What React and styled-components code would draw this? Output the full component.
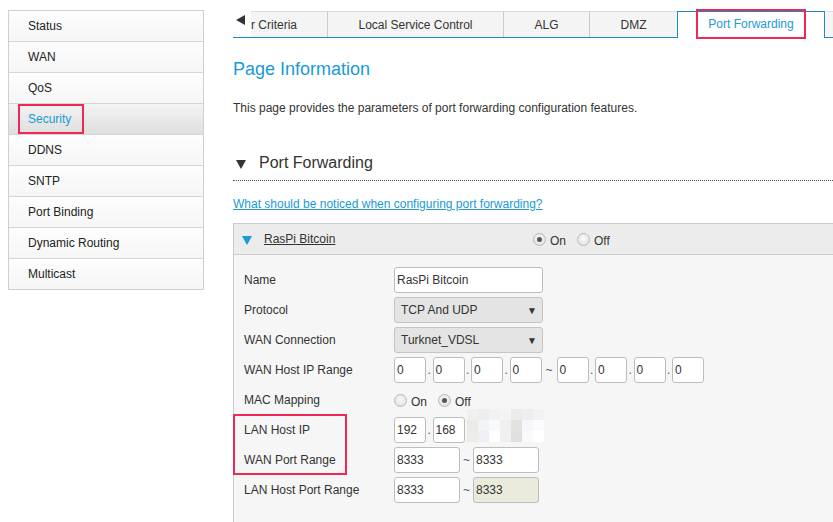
import styled, { createGlobalStyle, css } from "styled-components";

const GlobalStyle = createGlobalStyle`
  * { box-sizing: border-box; }
  body {
    margin: 0;
    background: #fff;
    color: #333;
    font-family: "Liberation Sans", Arial, sans-serif;
    font-size: 12px;
    overflow: hidden;
  }
`;

const BLUE = "#1a9ad6";
const RED = "#ec2a55";

const Page = styled.div`
  display: flex;
  gap: 29px;
  padding: 10px 0 0 8px;
  width: 900px;
`;

/* ---------- sidebar ---------- */

const SideMenu = styled.ul`
  list-style: none;
  margin: 0;
  padding: 0;
  width: 196px;
  flex: none;
  align-self: flex-start;
  border: 1px solid #cfcfcf;
`;

const NavItem = styled.li`
  height: 31px;
  display: flex;
  align-items: center;
  padding-left: 9px;
  border-bottom: 1px solid #d6d6d6;
  background: linear-gradient(#fdfdfd, #f6f6f6);
  color: #222;
  &:last-child { border-bottom: none; height: 30px; }
  ${(p) =>
    p.$active &&
    css`
      background: linear-gradient(#f3f3f3, #dfdfdf);
      color: ${BLUE};
    `}
`;

const NavLabel = styled.span`
  display: inline-block;
  height: 30px;
  line-height: 26px;
  padding: 0 11px 0 8px;
  border: 2px solid ${(p) => (p.$marked ? RED : "transparent")};
`;

/* ---------- main ---------- */

const Main = styled.div`
  width: 640px;
  flex: none;
`;

const TabBar = styled.div`
  display: flex;
  align-items: flex-start;
  margin-top: 1px;
  border-bottom: 1px solid #1a8ac6;
`;

const ScrollArrow = styled.div`
  width: 18px;
  height: 26px;
  flex: none;
  padding: 4px 0 0 3px;
  &::before {
    content: "";
    display: block;
    width: 0;
    height: 0;
    border-top: 5px solid transparent;
    border-bottom: 5px solid transparent;
    border-right: 9px solid #333;
  }
`;

const Tab = styled.div`
  flex: none;
  width: ${(p) => p.$w}px;
  height: 26px;
  display: flex;
  align-items: center;
  justify-content: ${(p) => (p.$clipped ? "flex-start" : "center")};
  background: #f4f4f4;
  border-top: 1px solid #dcdcdc;
  border-right: 1px solid #cacaca;
  color: #333;
  white-space: nowrap;
  ${(p) =>
    p.$active &&
    css`
      height: 27px;
      margin: 0 1px -1px -1px;
      background: #fff;
      border: 1px solid #1a8ac6;
      border-bottom: none;
      color: ${BLUE};
    `}
`;

const TabLabel = styled.span`
  display: inline-block;
  height: 30px;
  line-height: 26px;
  padding: 0 10px;
  margin-top: -3px;
  border: 2px solid ${RED};
`;

const PageTitle = styled.h1`
  margin: 20px 0 0;
  font-size: 18px;
  line-height: 22px;
  font-weight: normal;
  color: ${BLUE};
`;

const Description = styled.p`
  margin: 20px 0 0;
  line-height: 16px;
`;

const SectionHead = styled.h2`
  margin: 37px 0 0;
  display: flex;
  align-items: center;
  gap: 13px;
  padding: 0 0 8px 3px;
  border-bottom: 1px dotted #555;
  font-size: 16px;
  line-height: 19px;
  font-weight: normal;
  color: #333;
  &::before {
    content: "";
    margin-top: 4px;
    border-left: 5px solid transparent;
    border-right: 5px solid transparent;
    border-top: 9px solid #333;
  }
`;

const HelpLink = styled.a`
  display: block;
  margin-top: 15px;
  line-height: 16px;
  color: ${BLUE};
  text-decoration: underline;
`;

const Panel = styled.div`
  margin-top: 11px;
`;

const PanelHead = styled.div`
  height: 32px;
  display: flex;
  align-items: center;
  padding-left: 8px;
  background: #ececec;
  border: 1px solid #cccccc;
`;

const Caret = styled.span`
  flex: none;
  margin: 2px 12px 0 0;
  border-left: 5px solid transparent;
  border-right: 5px solid transparent;
  border-top: 9px solid ${BLUE};
`;

const EntryName = styled.span`
  flex: 0 0 269px;
  color: #333;
  text-decoration: underline;
`;

const RadioGroup = styled.div`
  display: flex;
  align-items: center;
  gap: 4px;
`;

const Radio = styled.span`
  position: relative;
  display: inline-block;
  width: 13px;
  height: 13px;
  border-radius: 50%;
  border: 1px solid #b9b9b9;
  background: radial-gradient(circle at 50% 40%, #fafafa 0%, #dedede 90%);
  &:not(:first-child) { margin-left: 7px; }
  ${(p) =>
    p.$checked &&
    css`
      &::after {
        content: "";
        position: absolute;
        left: 3px;
        top: 3px;
        width: 5px;
        height: 5px;
        border-radius: 50%;
        background: #555;
      }
    `}
`;

const RadioText = styled.span`
  margin-top: 3px;
  color: #333;
`;

const PanelBody = styled.div`
  position: relative;
  padding: 10px 0 22px 10px;
  background: #f6f6f6;
  border-left: 1px solid #cccccc;
`;

const Row = styled.div`
  height: 30px;
  display: flex;
  align-items: center;
`;

const Label = styled.div`
  flex: 0 0 150px;
  color: #333;
`;

const Field = styled.div`
  display: flex;
  align-items: center;
`;

const TextBox = styled.div`
  width: ${(p) => p.$w}px;
  height: 26px;
  display: flex;
  align-items: center;
  padding-left: 2px;
  background: ${(p) => (p.$readonly ? "#ebebdc" : "#fff")};
  border: 1px solid #bdbdbd;
  border-radius: 3px;
  color: #333;
`;

const Select = styled.div`
  width: 149px;
  height: 26px;
  display: flex;
  align-items: center;
  justify-content: space-between;
  padding: 0 5px 0 6px;
  background: #e4e4e4;
  border: 1px solid #c4c4c4;
  border-radius: 3px;
  color: #333;
  &::after {
    content: "▼";
    font-size: 10px;
    color: #333;
  }
`;

const Sep = styled.span`
  width: ${(p) => p.$w || 6.5}px;
  text-align: center;
  color: #555;
`;

const Blur = styled.div`
  display: grid;
  grid-template-columns: repeat(7, 11px);
  grid-auto-rows: 11px;
  margin: 0 0 10px 2px;
`;

const BlurCell = styled.div`
  background: ${(p) => p.$c};
`;

const Marker = styled.div`
  position: absolute;
  left: -1px;
  top: 159px;
  width: 114px;
  height: 61px;
  border: 2px solid ${RED};
`;

const menu = [
  "Status",
  "WAN",
  "QoS",
  "Security",
  "DDNS",
  "SNTP",
  "Port Binding",
  "Dynamic Routing",
  "Multicast",
];

const tabs = [
  { label: "r Criteria", w: 77, clipped: true },
  { label: "Local Service Control", w: 176 },
  { label: "ALG", w: 86 },
  { label: "DMZ", w: 88 },
  { label: "Port Forwarding", w: 148, active: true },
  { label: "", w: 140 },
];

const blurColors = [
  "#f0f0f0", "#eeeeee", "#f2f2f2", "#f4f4f4", "#ececec", "#eeeeee", "#f2f2f2",
  "#edebe8", "#f2f4f8", "#f8f9fb", "#f0f0f0", "#e4e2e0", "#f6f7fa", "#fbfbfd",
  "#eeece9", "#eef0f5", "#ffffff", "#f0f0f0", "#e2e0de", "#f9fafc", "#ffffff",
];

const IpRange = ({ values }) => (
  <Field>
    {values.map((v, i) => (
      <Field key={i}>
        {i > 0 && <Sep $w={i === 4 ? 15 : 6.5}>{i === 4 ? "~" : "."}</Sep>}
        <TextBox $w={32}>{v}</TextBox>
      </Field>
    ))}
  </Field>
);

const PortRange = ({ from, to, readonlyTo }) => (
  <Field>
    <TextBox $w={66}>{from}</TextBox>
    <Sep $w={13}>~</Sep>
    <TextBox $w={66} $readonly={readonlyTo}>{to}</TextBox>
  </Field>
);

export default function App() {
  return (
    <>
      <GlobalStyle />
      <Page>
        <SideMenu>
          {menu.map((item) => (
            <NavItem key={item} $active={item === "Security"}>
              <NavLabel $marked={item === "Security"}>{item}</NavLabel>
            </NavItem>
          ))}
        </SideMenu>

        <Main>
          <TabBar>
            <ScrollArrow />
            {tabs.map((t, i) => (
              <Tab key={i} $w={t.w} $active={t.active} $clipped={t.clipped}>
                {t.active ? <TabLabel>{t.label}</TabLabel> : t.label}
              </Tab>
            ))}
          </TabBar>

          <PageTitle>Page Information</PageTitle>
          <Description>
            This page provides the parameters of port forwarding configuration features.
          </Description>

          <SectionHead>Port Forwarding</SectionHead>
          <HelpLink>What should be noticed when configuring port forwarding?</HelpLink>

          <Panel>
            <PanelHead>
              <Caret />
              <EntryName>RasPi Bitcoin</EntryName>
              <RadioGroup>
                <Radio $checked />
                <RadioText>On</RadioText>
                <Radio />
                <RadioText>Off</RadioText>
              </RadioGroup>
            </PanelHead>

            <PanelBody>
              <Row>
                <Label>Name</Label>
                <TextBox $w={149}>RasPi Bitcoin</TextBox>
              </Row>
              <Row>
                <Label>Protocol</Label>
                <Select>TCP And UDP</Select>
              </Row>
              <Row>
                <Label>WAN Connection</Label>
                <Select>Turknet_VDSL</Select>
              </Row>
              <Row>
                <Label>WAN Host IP Range</Label>
                <IpRange values={["0", "0", "0", "0", "0", "0", "0", "0"]} />
              </Row>
              <Row>
                <Label>MAC Mapping</Label>
                <RadioGroup>
                  <Radio />
                  <RadioText>On</RadioText>
                  <Radio $checked />
                  <RadioText>Off</RadioText>
                </RadioGroup>
              </Row>
              <Row>
                <Label>LAN Host IP</Label>
                <Field>
                  <TextBox $w={32}>192</TextBox>
                  <Sep>.</Sep>
                  <TextBox $w={32}>168</TextBox>
                  <Blur>
                    {blurColors.map((c, i) => (
                      <BlurCell key={i} $c={c} />
                    ))}
                  </Blur>
                </Field>
              </Row>
              <Row>
                <Label>WAN Port Range</Label>
                <PortRange from="8333" to="8333" />
              </Row>
              <Row>
                <Label>LAN Host Port Range</Label>
                <PortRange from="8333" to="8333" readonlyTo />
              </Row>
              <Marker />
            </PanelBody>
          </Panel>
        </Main>
      </Page>
    </>
  );
}
